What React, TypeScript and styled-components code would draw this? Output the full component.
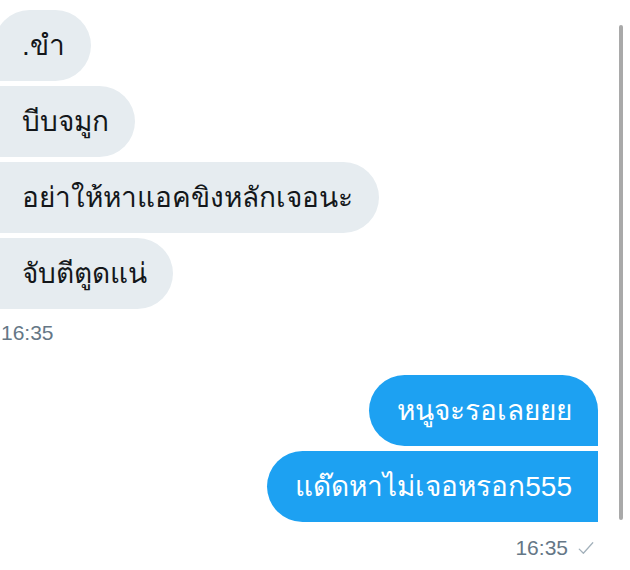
import React from "react";
import styled, { createGlobalStyle, css } from "styled-components";

const Global = createGlobalStyle`
  html, body { margin: 0; padding: 0; background: #ffffff; }
  body { width: 630px; height: 570px; overflow: hidden; }
`;

const Page = styled.div`
  width: 630px;
  height: 570px;
  display: flex;
  flex-direction: row;
  background: #ffffff;
  font-family: "Liberation Sans", "Noto Sans", sans-serif;
  overflow: hidden;
`;

const Conversation = styled.div`
  flex: 1;
  display: flex;
  flex-direction: column;
  padding: 10px 21px 0 0;
  min-width: 0;
`;

const Group = styled.div<{ $side: "in" | "out" }>`
  display: flex;
  flex-direction: column;
  align-items: ${(p) => (p.$side === "in" ? "flex-start" : "flex-end")};
  gap: 5px;
  ${(p) =>
    p.$side === "in"
      ? css`margin-left: -6px;`
      : css`margin-top: 30px;`}
`;

type Pos = "first" | "middle" | "last";

const radius = (side: "in" | "out", pos: Pos) => {
  const R = 36;
  const s = 5;
  if (side === "in") {
    if (pos === "first") return `${R}px ${R}px ${R}px ${s}px`;
    if (pos === "middle") return `${s}px ${R}px ${R}px ${s}px`;
    return `${s}px ${R}px ${R}px 0`;
  }
  if (pos === "first") return `${R}px ${R}px 0 ${R}px`;
  if (pos === "middle") return `${R}px ${s}px ${s}px ${R}px`;
  return `${R}px 0 0 ${R}px`;
};

const Bubble = styled.div<{ $side: "in" | "out"; $pos: Pos }>`
  box-sizing: border-box;
  height: 71px;
  display: flex;
  align-items: center;
  padding: 0 26px 0 28px;
  font-size: 28px;
  line-height: 34px;
  white-space: nowrap;
  border-radius: ${(p) => radius(p.$side, p.$pos)};
  background: ${(p) => (p.$side === "in" ? "#e6ecf0" : "#1da1f2")};
  color: ${(p) => (p.$side === "in" ? "#14171a" : "#ffffff")};
`;

const Stamp = styled.div<{ $side: "in" | "out" }>`
  display: flex;
  align-items: center;
  gap: 9px;
  font-size: 21px;
  line-height: 24px;
  color: #657786;
  ${(p) =>
    p.$side === "in"
      ? css`margin: 7px 0 0 7px;`
      : css`margin: 9px 3px 0 0; align-self: flex-end;`}
`;

const Check = styled.svg`
  width: 18px;
  height: 18px;
  color: #a3b1bb;
`;

const ScrollTrack = styled.div`
  width: 11px;
  display: flex;
  justify-content: flex-start;
  padding-top: 25px;
`;

const ScrollThumb = styled.div`
  width: 4px;
  height: 495px;
  border-radius: 2px;
  background: #a9a9a9;
`;

const received = [".ขำ", "บีบจมูก", "อย่าให้หาแอคขิงหลักเจอนะ", "จับตีตูดแน่"];
const sent = ["หนูจะรอเลยยย", "แด๊ดหาไม่เจอหรอก555"];

const posOf = (i: number, n: number): Pos =>
  i === 0 ? "first" : i === n - 1 ? "last" : "middle";

export default function App() {
  return (
    <>
      <Global />
      <Page>
        <Conversation>
          <Group $side="in">
            {received.map((t, i) => (
              <Bubble key={i} $side="in" $pos={posOf(i, received.length)}>
                {t}
              </Bubble>
            ))}
            <Stamp $side="in">16:35</Stamp>
          </Group>
          <Group $side="out">
            {sent.map((t, i) => (
              <Bubble key={i} $side="out" $pos={posOf(i, sent.length)}>
                {t}
              </Bubble>
            ))}
            <Stamp $side="out">
              16:35
              <Check viewBox="0 0 24 24" fill="none" stroke="currentColor" strokeWidth="1.7" strokeLinecap="round" strokeLinejoin="round">
                <path d="M3 13.5l5.5 5.5L21 5" />
              </Check>
            </Stamp>
          </Group>
        </Conversation>
        <ScrollTrack>
          <ScrollThumb />
        </ScrollTrack>
      </Page>
    </>
  );
}
